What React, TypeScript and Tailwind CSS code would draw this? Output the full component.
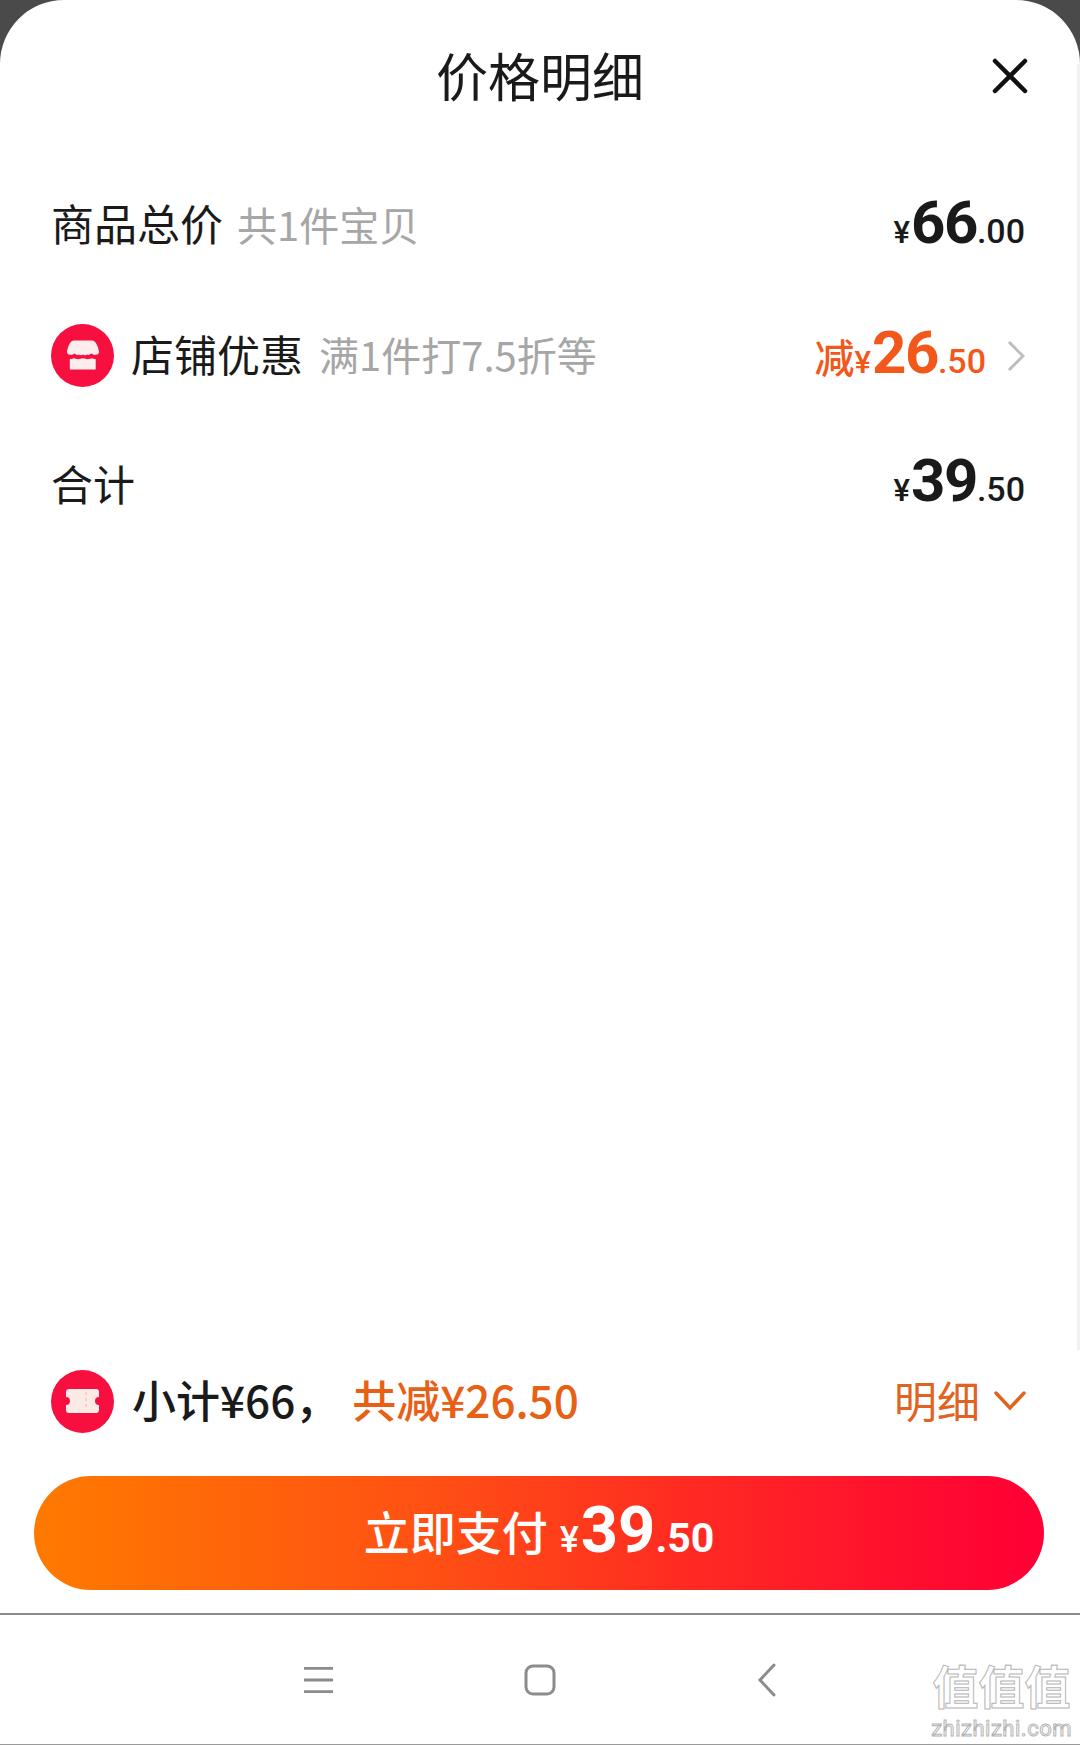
// 价格明细弹层
const cjk = "font-['Noto_Sans_CJK_SC','Noto_Sans',sans-serif]";
const num = "font-['Roboto','Noto_Sans_CJK_SC',sans-serif]";

function Price({ int, dec, color = "text-[#1a1a1a]" }: { int: string; dec: string; color?: string }) {
  return (
    <span className={`${num} ${color} flex items-baseline leading-none`}>
      <span className="text-[31px] font-medium mr-[1px]">¥</span>
      <span className="text-[60px] font-bold tracking-[-1.500px]">{int}</span>
      <span className="text-[34px] font-medium">.{dec}</span>
    </span>
  );
}

function IconBadge({ kind }: { kind: "shop" | "ticket" }) {
  return (
    <span className="w-[63px] h-[63px] rounded-full bg-[#f7103f] flex items-center justify-center shrink-0">
      {kind === "shop" ? (
        <svg width="32" height="31" viewBox="0 0 34 32" fill="#fdeeee">
          <path d="M7 0h20c4 1 6 6 7 12 0 2-1 3-3 3-2 1-3 0-5-1-2 1-3 2-4.500 1-1.500 1-3.500 1-4.500 0-1 1-3 1-4.500 0-1.500 1-3 0-4.500-1-2 1-3 2-5 1-2 0-3-1-3-3C1 6 3 1 7 0z" />
          <path d="M3 20c2 0 3-1 4.500-1 1.500 0 2 1 4 1s3-1 5.500-1 3 1 5 1 3-1 4.500-1 2 1 4 1v10a1 1 0 0 1-1 1H4a1 1 0 0 1-1-1z" />
        </svg>
      ) : (
        <svg width="33" height="24" viewBox="0 0 33 24" fill="#fbeae6">
          <path d="M3 0h27a3 3 0 0 1 3 3v5a4 4 0 0 0 0 8v5a3 3 0 0 1-3 3H3a3 3 0 0 1-3-3v-5a4 4 0 0 0 0-8V3a3 3 0 0 1 3-3z" />
          <path d="M20 3v18" stroke="#f0c9c4" strokeWidth="1.500" strokeDasharray="3 3" fill="none" />
        </svg>
      )}
    </span>
  );
}

export default function App() {
  return (
    <div className={`${cjk} relative w-[1080px] h-[1745px] bg-[#4a4a4a] overflow-hidden`}>
      <div className="h-full bg-white rounded-t-[64px] flex flex-col border-b border-b-[#9a9a9a]">
        {/* 标题 */}
        <div className="relative h-[154px] shrink-0 flex items-center justify-center">
          <h1 className="text-[52px] leading-none font-normal text-[#1a1a1a] mb-[5px]">价格明细</h1>
          <svg className="absolute right-[52px] top-[58px]" width="36" height="36" viewBox="0 0 36 36" fill="none" stroke="#111" strokeWidth="4.500" strokeLinecap="round">
            <path d="M3 3l30 30M33 3L3 33" />
          </svg>
        </div>

        {/* 明细 */}
        <div className="flex flex-col pl-[51px] pr-[55px]">
          <div className="h-[129px] pt-[8px] flex items-center justify-between">
            <div className="flex items-center">
              <span className="text-[43px] text-[#1a1a1a]">商品总价</span>
              <span className="text-[40px] text-[#a6a6a6] ml-[14px] mt-[2px]">共1件宝贝</span>
            </div>
            <Price int="66" dec="00" />
          </div>
          <div className="h-[134px] pt-[11px] flex items-center justify-between">
            <div className="flex items-center">
              <IconBadge kind="shop" />
              <span className="text-[43px] text-[#1a1a1a] ml-[17px] mb-[4px]">店铺优惠</span>
              <span className="text-[40px] text-[#a6a6a6] ml-[16px] mb-[4px]">满1件打7.5折等</span>
            </div>
            <div className="flex items-center">
              <span className="text-[40px] font-medium text-[#f2581a] leading-none">减</span>
              <span className="mb-[6px]">
                <Price int="26" dec="50" color="text-[#f2581a]" />
              </span>
              <svg className="ml-[21px]" width="18" height="32" viewBox="0 0 18 32" fill="none" stroke="#bdbdbd" strokeWidth="3">
                <path d="M2 2l14 14L2 30" />
              </svg>
            </div>
          </div>
          <div className="h-[131px] flex items-center justify-between">
            <span className="text-[42px] text-[#1a1a1a]">合计</span>
            <span className="mb-[4px]">
              <Price int="39" dec="50" />
            </span>
          </div>
        </div>

        <div className="flex-1" />

        {/* 小计 */}
        <div className="flex items-center justify-between pl-[51px] pr-[54px] pb-[40px]">
          <div className="flex items-center">
            <IconBadge kind="ticket" />
            <span className="text-[44px] font-medium text-[#1a1a1a] ml-[18px] mb-[4px]">小计¥66，</span>
            <span className="text-[44px] font-medium text-[#e85f16] ml-[13px] mb-[4px]">共减¥26.50</span>
          </div>
          <div className="flex items-center">
            <span className="text-[43px] text-[#e0641f] mb-[4px]">明细</span>
            <svg className="ml-[14px]" width="32" height="20" viewBox="0 0 32 20" fill="none" stroke="#e0641f" strokeWidth="3.500" strokeLinecap="round">
              <path d="M2 2l14 15L30 2" />
            </svg>
          </div>
        </div>

        {/* 支付按钮 */}
        <div className="pl-[34px] pr-[36px]">
          <button className="w-full h-[114px] rounded-full bg-[linear-gradient(90deg,#ff7a00_0%,#ff4f14_40%,#ff2a22_65%,#ff0a30_90%,#ff0036_100%)] flex items-center justify-center text-white pb-[6px]">
            <span className="text-[46px] font-medium mr-[12px]">立即支付</span>
            <span className={`${num} flex items-baseline leading-none`}>
              <span className="text-[36px] font-medium mr-[2px]">¥</span>
              <span className="text-[65px] font-bold">39</span>
              <span className="text-[41px] font-bold">.50</span>
            </span>
          </button>
        </div>

        {/* 系统导航栏 */}
        <div className="mt-[23px] flex-none h-[131px] border-t-2 border-[#8a8a8a] flex items-center justify-center pt-[1px] relative">
          <div className="flex items-center">
            <svg width="31" height="28" viewBox="0 0 32 28" fill="none" stroke="#8c8c8c" strokeWidth="3">
              <path d="M1 2h30M1 14h30M1 26h30" />
            </svg>
            <svg className="ml-[190px]" width="32" height="32" viewBox="0 0 32 32" fill="none" stroke="#8c8c8c" strokeWidth="3">
              <rect x="2" y="2" width="28" height="28" rx="7" />
            </svg>
            <svg className="ml-[201px]" width="20" height="34" viewBox="0 0 20 34" fill="none" stroke="#8c8c8c" strokeWidth="3" strokeLinecap="round">
              <path d="M17 2L3 17l14 15" />
            </svg>
          </div>
          {/* 水印 */}
          <div className="absolute right-[8px] top-[46px] flex flex-col items-center text-white [-webkit-text-stroke:1px_#b5b5b5]">
            <span className="text-[46px] leading-none font-bold">值值值</span>
            <span className={`${num} text-[22px] leading-none mt-[11px] tracking-[0.5px]`}>zhizhizhi.com</span>
          </div>
        </div>
      </div>
      {/* 右侧滚动条痕迹 */}
      <div className="absolute right-0 top-[64px] w-[3px] h-[1286px] bg-[#f1f1f1]" />
    </div>
  );
}
